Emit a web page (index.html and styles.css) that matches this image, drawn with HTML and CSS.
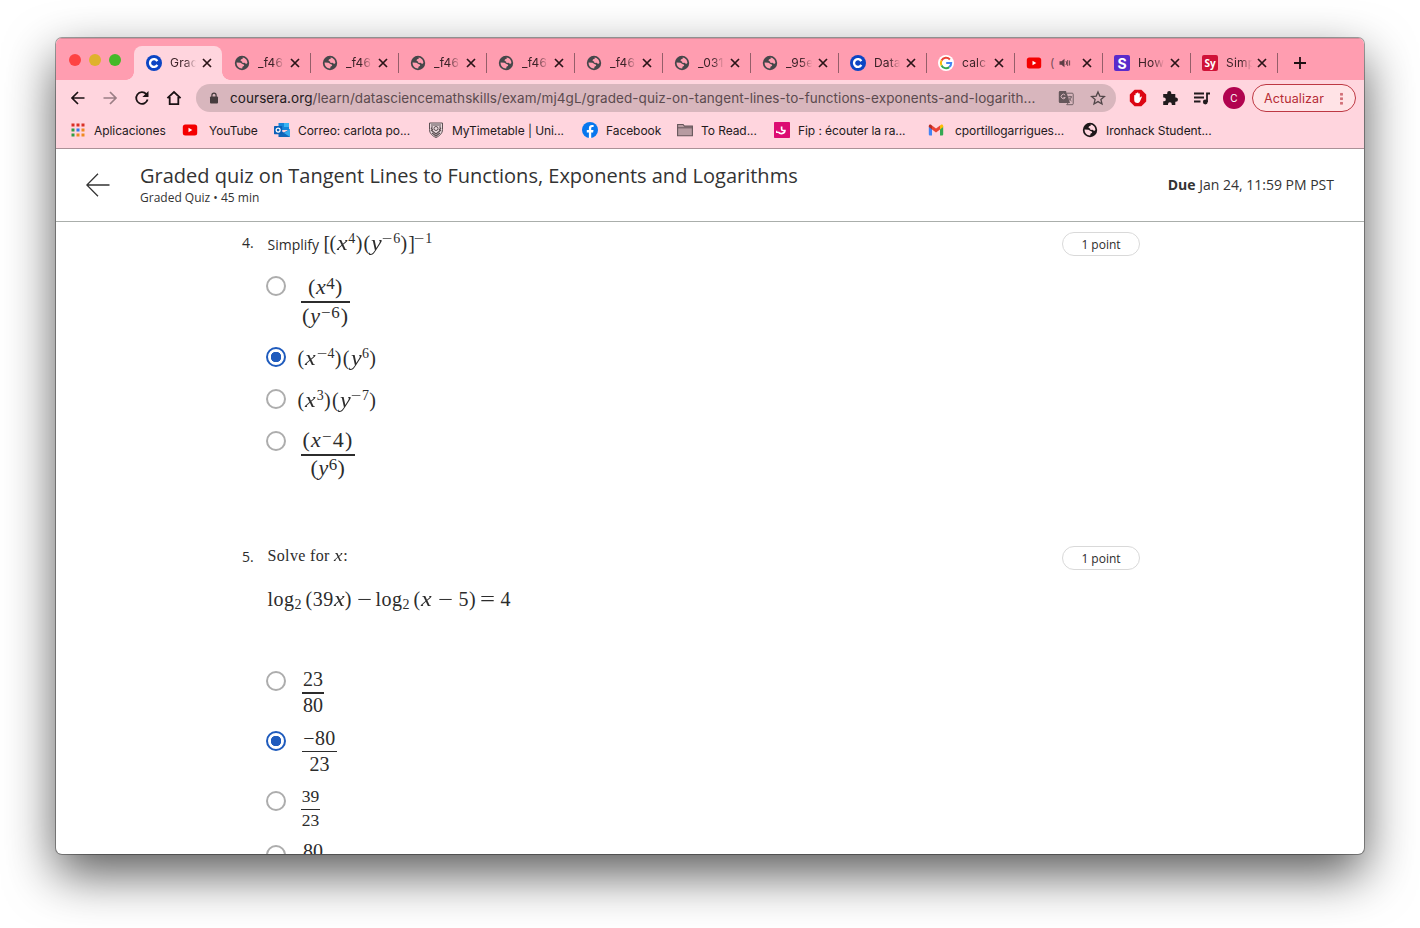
FILE: index.html
```html
<!DOCTYPE html>
<html lang="es">
<head>
<meta charset="utf-8">
<title>Graded quiz</title>
<link rel="stylesheet" href="styles.css">
</head>
<body>
<svg class="sprite" aria-hidden="true">
  <symbol id="close" viewBox="0 0 10 10"><path d="M1 1l8 8M9 1L1 9" stroke="#2b1418" stroke-width="1.7" fill="none"/></symbol>
  <symbol id="globe" viewBox="0 0 16 16"><circle cx="8" cy="8" r="7.200" fill="currentColor"/><path d="M8.600 2.500C11.300 2.800 13.400 5.200 13.400 8l-1.300.9-1.500-1.100-2 .1-.6-1.500-1.500-.7.5-1.500 1.600-.2z" fill="var(--cut)"/><path d="M2.600 7.500l3.900.3 1.900 1.300 1.400.3.400 1.300-1.700 1-.3 1.700C4.900 13.500 2.600 11 2.600 8z" fill="var(--cut)"/></symbol>
  <symbol id="coursera" viewBox="0 0 16 16"><circle cx="8" cy="8" r="8" fill="#0b45c4"/><path d="M11.300 9.900A3.900 3.900 0 1 1 11.300 6.100" stroke="#fff" stroke-width="2.300" fill="none"/></symbol>
  <symbol id="youtube" viewBox="0 0 16 16"><rect x=".8" y="2.600" width="14.400" height="10.800" rx="2.500" fill="#f40000"/><path d="M6.500 5.800v4.400L10.300 8z" fill="#fff"/></symbol>
  <symbol id="google" viewBox="0 0 16 16"><circle cx="8" cy="8" r="8" fill="#fff"/><path d="M11.900 4.500A5.200 5.200 0 0 0 3.500 5.500" stroke="#ea4335" stroke-width="2" fill="none"/><path d="M3.500 5.500a5.200 5.200 0 0 0 0 5" stroke="#fbbc05" stroke-width="2" fill="none"/><path d="M3.500 10.500a5.200 5.200 0 0 0 7.800 1.600" stroke="#34a853" stroke-width="2" fill="none"/><path d="M8.200 8h5a5.200 5.200 0 0 1-1.900 4.100" stroke="#4285f4" stroke-width="2" fill="none"/></symbol>
</svg>

<div class="window">
  <div class="tabstrip">
    <div class="lights"><i class="red"></i><i class="yellow"></i><i class="green"></i></div>
    <div class="tab active"><svg class="ico"><use href="#coursera"/></svg><span class="title">Grad</span><svg class="x"><use href="#close"/></svg></div>
    <div class="tab"><svg class="ico"><use href="#globe"/></svg><span class="title">_f46</span><svg class="x"><use href="#close"/></svg></div>
    <div class="tab"><svg class="ico"><use href="#globe"/></svg><span class="title">_f46</span><svg class="x"><use href="#close"/></svg></div>
    <div class="tab"><svg class="ico"><use href="#globe"/></svg><span class="title">_f46</span><svg class="x"><use href="#close"/></svg></div>
    <div class="tab"><svg class="ico"><use href="#globe"/></svg><span class="title">_f46</span><svg class="x"><use href="#close"/></svg></div>
    <div class="tab"><svg class="ico"><use href="#globe"/></svg><span class="title">_f46</span><svg class="x"><use href="#close"/></svg></div>
    <div class="tab"><svg class="ico"><use href="#globe"/></svg><span class="title">_031</span><svg class="x"><use href="#close"/></svg></div>
    <div class="tab"><svg class="ico"><use href="#globe"/></svg><span class="title">_95e</span><svg class="x"><use href="#close"/></svg></div>
    <div class="tab"><svg class="ico"><use href="#coursera"/></svg><span class="title">Data</span><svg class="x"><use href="#close"/></svg></div>
    <div class="tab"><svg class="ico"><use href="#google"/></svg><span class="title">calc</span><svg class="x"><use href="#close"/></svg></div>
    <div class="tab audible"><svg class="ico"><use href="#youtube"/></svg><span class="title">(</span><svg class="sound" viewBox="0 0 12 10"><path d="M.5 3.300h2L5.500.8v8.400L2.500 6.700h-2z" fill="#5d3d44"/><path d="M7 3q1.300 2 0 4M8.700 2v6M10.600 2.500v5" stroke="#5d3d44" stroke-width=".9" fill="none"/></svg><svg class="x"><use href="#close"/></svg></div>
    <div class="tab"><span class="ico badge purple">S</span><span class="title">How</span><svg class="x"><use href="#close"/></svg></div>
    <div class="tab last"><span class="ico badge crimson">Sy</span><span class="title">Simp</span><svg class="x"><use href="#close"/></svg></div>
    <svg class="plus" viewBox="0 0 12 12"><path d="M6 0v12M0 6h12" stroke="#1d1013" stroke-width="1.800"/></svg>
  </div>

  <div class="toolbar">
    <svg class="nav" viewBox="0 0 16 16"><path d="M14.500 8H2.500M8 2L2 8l6 6" stroke="#1b1214" stroke-width="1.700" fill="none"/></svg>
    <svg class="nav" viewBox="0 0 16 16"><path d="M1.500 8h12M8 2l6 6-6 6" stroke="#9b7e85" stroke-width="1.700" fill="none"/></svg>
    <svg class="nav" viewBox="0 0 16 16"><path d="M13.600 9.600A5.800 5.800 0 1 1 12.300 4.100" stroke="#1b1214" stroke-width="1.800" fill="none"/><path d="M14.500 1v6.100H8.400z" fill="#1b1214"/></svg>
    <svg class="nav" viewBox="0 0 16 16"><path d="M1.400 8.200L8 2l6.600 6.200M3.700 7v7.200h8.600V7" stroke="#1b1214" stroke-width="1.800" fill="none"/></svg>
    <div class="omnibox">
      <svg class="lock" viewBox="0 0 10 12"><rect x="1" y="4.500" width="8" height="7" rx="1" fill="#463c3e"/><path d="M2.900 5V3.200a2.100 2.100 0 0 1 4.200 0V5" stroke="#463c3e" stroke-width="1.200" fill="none"/></svg>
      <span class="url"><b>coursera.org</b>/learn/datasciencemathskills/exam/mj4gL/graded-quiz-on-tangent-lines-to-functions-exponents-and-logarith...</span>
      <svg class="translate" viewBox="0 0 16 16"><path d="M2 1h6l4 12H2a1.200 1.200 0 0 1-1.200-1.200V2.200A1.200 1.200 0 0 1 2 1z" fill="#65575b"/><path d="M7.200 5.200A2.200 2.200 0 1 0 7.300 7.600H5.400" stroke="#d7b6bd" fill="none"/><path d="M9 3.200h5.200a1 1 0 0 1 1 1v9.500a1 1 0 0 1-1 1H8.700l1.600-2M9.700 6.800h4.300M12 5.800v1M13.300 6.800c-.4 2-1.500 3.200-2.900 4.200M10.700 7.900c.7 1.300 1.700 2.300 2.800 3.100" stroke="#65575b" stroke-width=".9" fill="none"/></svg>
      <svg class="star" viewBox="0 0 16 16"><path d="M8 1.900l1.800 4.200 4.600.4-3.500 3 1.100 4.500L8 11.600 4 14l1.100-4.500-3.500-3 4.600-.4z" stroke="#514649" stroke-width="1.300" fill="none"/></svg>
    </div>
    <svg class="ext" viewBox="0 0 18 18"><path d="M5.600.8h6.800l4.800 4.800v6.800l-4.800 4.800H5.600L.8 12.400V5.600z" fill="#dc0613"/><path d="M5.200 9V6.300q.8-.8 1.300 0V4.500q.8-.8 1.400 0V3.800q.9-.8 1.500 0v.9q.9-.7 1.400.1v4l1.200-1.300q1.100-.2.900.6l-2 4.300q-.8 1.500-2.400 1.500-3.300 0-3.300-3.200z" fill="#fff"/></svg>
    <svg class="ext" viewBox="0 0 18 18"><path d="M2.200 5h4V4a2 2 0 0 1 4.100 0v1h4v3.600h.6a2 2 0 0 1 0 4.100h-.6V16h-3.500v-.8a1.900 1.900 0 0 0-3.800 0v.8H2.200v-3.700h.7a1.900 1.900 0 0 0 0-3.800h-.7z" fill="#211b1d"/></svg>
    <svg class="ext" viewBox="0 0 18 18"><path d="M1 4.500h10M1 8.500h10M1 12.500h6.500M14 13V4.500h3" stroke="#211b1d" stroke-width="1.800" fill="none"/><circle cx="12.300" cy="13" r="2.400" fill="#211b1d"/></svg>
    <span class="avatar">C</span>
    <span class="update"><span>Actualizar</span><i class="dots"></i></span>
  </div>

  <div class="bookmarks">
    <div class="bm"><svg viewBox="0 0 16 16"><g fill="#d93025"><path d="M1.500 1.500h3v3h-3zM6.500 1.500h3v3h-3zM11.500 1.500h3v3h-3z"/></g><path d="M1.500 6.500h3v3h-3zM1.500 11.500h3v3h-3z" fill="#2f9e44"/><path d="M6.500 6.500h3v3h-3z" fill="#3078ed"/><path d="M11.500 6.500h3v3h-3zM11.500 11.500h3v3h-3zM6.500 11.500h3v3h-3z" fill="#ef8a21"/></svg><span>Aplicaciones</span></div>
    <div class="bm wide"><svg><use href="#youtube"/></svg><span>YouTube</span></div>
    <div class="bm"><svg viewBox="0 0 16 16"><path d="M4.500 1H15v7H4.500z" fill="#1686d9"/><path d="M10 1h5v4h-5z" fill="#39b4f3"/><path d="M4.500 8L10 10.500 16 7v8H4.500z" fill="#1267b9"/><path d="M10 11l6-4v8z" fill="#35a9ee"/><rect x="0" y="4" width="8.200" height="8.200" rx=".6" fill="#0c60b8"/><circle cx="4.100" cy="8.100" r="2" stroke="#fff" stroke-width="1.200" fill="none"/></svg><span>Correo: carlota po...</span></div>
    <div class="bm"><svg viewBox="0 0 16 16"><path d="M1.500 1h13v6.500c0 4-3 6.500-6.500 8-3.500-1.500-6.500-4-6.500-8z" fill="#e9d9dc" stroke="#5d5054"/><path d="M3 3h10M3 5h2M11 5h2M3 8l5 4 5-4M4 11l4 3 4-3M3 6l2 2M13 6l-2 2" stroke="#5d5054" stroke-width="1.200" fill="none"/><circle cx="8" cy="6.500" r="2" stroke="#5d5054" fill="none"/></svg><span>MyTimetable | Uni...</span></div>
    <div class="bm"><svg viewBox="0 0 16 16"><circle cx="8" cy="8" r="8" fill="#0877ee"/><path d="M6.900 16v-5.500H4.800V8h2.100V6.200c0-2.200 1.200-3.300 3.100-3.300l1.600.1v2.100h-1.100c-1 0-1.300.6-1.300 1.300V8h2.300l-.4 2.500H9.200V16z" fill="#fff"/></svg><span>Facebook</span></div>
    <div class="bm"><svg viewBox="0 0 16 16"><path d="M.6 2.500h5.500l1.300 1.600h8v9.700H.6z" fill="#b79ba1" stroke="#65565a" stroke-width="1.100"/><path d="M.6 5.800h14.800" stroke="#65565a"/></svg><span>To Read...</span></div>
    <div class="bm"><svg viewBox="0 0 16 16"><rect width="16" height="16" rx=".8" fill="#dc0c72"/><path d="M7.600 4.600v2.600c0 1 .5 1.300 1.600 1.300h1.700c0 3.100-4.500 4.300-6.600 1.400" stroke="#fff" stroke-width="1.700" fill="none"/><path d="M2.700 8.800v1.600h2" stroke="#fff" stroke-width="1.300" fill="none"/></svg><span>Fip : écouter la ra...</span></div>
    <div class="bm wide"><svg viewBox="0 0 16 16"><path d="M.8 4.500L4 6.800v6.700H1.900A1.100 1.100 0 0 1 .8 12.400z" fill="#4285f4"/><path d="M15.200 4.500L12 6.800v6.700h2.100a1.100 1.100 0 0 0 1.100-1.100z" fill="#34a853"/><path d="M4 3.500l4 3 4-3v4l-4 3-4-3z" fill="#ea4335"/><path d="M.8 5V4C.8 2.500 2.300 2 3.300 2.900L4 3.500v4z" fill="#b92b22"/><path d="M15.200 5V4c0-1.500-1.500-2-2.500-1.100l-.7.6v4z" fill="#fbbc04"/></svg><span>cportillogarrigues...</span></div>
    <div class="bm dark"><svg><use href="#globe"/></svg><span>Ironhack Student...</span></div>
  </div>

  <div class="quizbar">
    <svg class="back" viewBox="0 0 24 24"><path d="M23.500 12H1M12 .8L.8 12 12 23.200" stroke="#333" stroke-width="1.300" fill="none"/></svg>
    <div class="heading"><h1>Graded quiz on Tangent Lines to Functions, Exponents and Logarithms</h1><p>Graded Quiz • 45 min</p></div>
    <div class="due"><b>Due</b> Jan 24, 11:59 PM PST</div>
  </div>

  <div class="quiz">
    <section class="question q4">
      <div class="head"><span class="no">4.</span><div class="stem"><span class="sans">Simplify</span> <span class="math"><span class="br">[</span>(<i>x</i><sup>4</sup>)(<i>y</i><sup><span class="m">−</span>6</sup>)<span class="br">]</span><sup><span class="m">−</span>1</sup></span></div><span class="points">1 point</span></div>
      <div class="option o1"><i class="radio"></i><span class="frac thick"><span class="num">(<i>x</i><sup>4</sup>)</span><span class="den">(<i>y</i><sup>−6</sup>)</span></span></div>
      <div class="option o2"><i class="radio on"></i><span class="math">(<i>x</i><sup><span class="m">−</span>4</sup>)(<i>y</i><sup>6</sup>)</span></div>
      <div class="option o3"><i class="radio"></i><span class="math">(<i>x</i><sup>3</sup>)(<i>y</i><sup><span class="m">−</span>7</sup>)</span></div>
      <div class="option o4"><i class="radio"></i><span class="frac thick"><span class="num">(<i>x</i><sup>−</sup>4)</span><span class="den">(<i>y</i><sup>6</sup>)</span></span></div>
    </section>
    <section class="question q5">
      <div class="head"><span class="no">5.</span><div class="stem"><p class="solve">Solve for <i>x</i>:</p><p class="equation math"><span class="e1">log<sub>2</sub></span><span class="e2">(39<i>x</i>)</span><span class="e3"><span class="m">−</span></span><span class="e4">log<sub>2</sub></span><span class="e5">(<i>x</i><span class="m op">−</span>5)</span><span class="e6"><span class="m">=</span></span><span>4</span></p></div><span class="points">1 point</span></div>
      <div class="option o5"><i class="radio"></i><span class="frac thick"><span class="num">23</span><span class="den">80</span></span></div>
      <div class="option o6"><i class="radio on"></i><span class="frac"><span class="num">−80</span><span class="den">23</span></span></div>
      <div class="option o7"><i class="radio"></i><span class="frac"><span class="num">39</span><span class="den">23</span></span></div>
      <div class="option o8"><i class="radio"></i><span class="frac"><span class="num">80</span></span></div>
    </section>
  </div>
</div>
</body>
</html>
```
FILE: styles.css
```css
* { box-sizing: border-box; }
body { margin: 0; height: 928px; padding: 38px 56px; background: #fff; overflow: hidden; font-family: Inter, "Liberation Sans", sans-serif; color: #2b1d20; }
.sprite { display: none; }
svg { display: block; flex: none; }
h1, p { margin: 0; font-weight: 400; }

.window { width: 1308px; height: 816px; display: flex; flex-direction: column; overflow: hidden; background: #fff; border-radius: 6px; box-shadow: 0 0 0 1px rgba(0,0,0,.35), 0 20px 50px rgba(0,0,0,.65); }

/* tabs */
.tabstrip { flex: none; height: 42px; display: flex; align-items: flex-end; background: #ff9db0; border-top: 1px solid #d98a99; --cut: #ff9db0; }
.lights { width: 78px; height: 42px; display: flex; gap: 8px; padding: 16px 0 0 13px; }
.lights i { width: 12px; height: 12px; border-radius: 50%; }
.red { background: #fe4343; }
.yellow { background: #dfb22b; }
.green { background: #45b927; }
.tab { position: relative; flex: none; width: 88px; height: 34px; display: flex; align-items: center; padding-left: 12px; color: #46474a; }
.tab:not(.active)::after { content: ""; flex: none; width: 1px; height: 20px; margin-left: 10px; background: #955e69; }
.ico { flex: none; width: 16px; height: 16px; }
.title { flex: none; width: 27px; margin-left: 8px; white-space: nowrap; font-size: 12px; letter-spacing: .2px; line-height: 18px; color: #3b2227; -webkit-mask-image: linear-gradient(90deg, #000 55%, transparent 97%); mask-image: linear-gradient(90deg, #000 55%, transparent 97%); }
.x { width: 10px; height: 10px; margin-left: 5px; }
.active { background: #ffd5de; border-radius: 8px 8px 0 0; }
.active::before, .active::after { content: ""; position: absolute; bottom: 0; width: 8px; height: 8px; }
.active::before { left: -8px; background: radial-gradient(circle at 0 0, transparent 7.500px, #ffd5de 8px); }
.active::after { right: -8px; background: radial-gradient(circle at 100% 0, transparent 7.500px, #ffd5de 8px); }
.audible .title { width: 6px; margin-left: 8px; color: #7a4d57; -webkit-mask-image: none; mask-image: none; }
.sound { width: 12px; height: 10px; margin-left: 3px; }
.audible .x { margin-left: 11px; }
.badge { display: flex; align-items: center; justify-content: center; color: #fff; font-weight: 700; border-radius: 2px; }
.purple { background: #5a2bcb; font-size: 14px; }
.crimson { background: #d01238; font-size: 10px; font-family: "Open Sans", sans-serif; }
.last .x { margin-left: 4px; }
.plus { width: 12px; height: 12px; margin: 0 0 11px 16px; }

/* toolbar */
.toolbar { flex: none; height: 37px; display: flex; align-items: center; padding: 0 8px 1px 14px; background: #ffd5de; }
.nav { width: 16px; height: 16px; margin-right: 16px; }
.omnibox { flex: none; width: 920px; height: 28px; margin-left: -2px; display: flex; align-items: center; padding-left: 13px; border-radius: 14px; background: #d8b6bd; }
.lock { width: 10px; height: 12px; }
.url { width: 820px; margin-left: 11px; white-space: nowrap; font-size: 13.500px; letter-spacing: .07px; line-height: 20px; color: #5b4a4e; }
.url b { font-weight: 400; color: #231a1c; }
.translate { width: 16px; height: 16px; margin-left: 8px; }
.star { width: 16px; height: 16px; margin-left: 16px; }
.ext { width: 18px; height: 18px; margin-left: 14px; }
.omnibox + .ext { margin-left: 13px; }
.avatar { flex: none; width: 22px; height: 22px; margin-left: 12px; border-radius: 50%; background: #b1034f; color: #fff; font-size: 10px; line-height: 22px; text-align: center; }
.update { flex: none; width: 104px; height: 28px; margin-left: 7px; display: flex; align-items: center; justify-content: space-between; padding: 0 12px 0 11px; border: 1px solid #bd3843; border-radius: 14px; background: #ffe3e6; color: #b62c35; font-size: 12.500px; letter-spacing: .1px; }
.dots { width: 3px; height: 13px; background: radial-gradient(circle, #d27078 1.300px, transparent 1.700px) 0 0 / 3px 4.500px; }

.bookmarks { flex: none; height: 32px; display: grid; grid-template-columns: 112px 92px 154px 154px 95px 97px 154px 154px 150px; padding-left: 14px; background: #ffd5de; border-bottom: 1px solid #ab9197; --cut: #ffd5de; }
.bm { height: 26px; display: flex; align-items: center; gap: 8px; white-space: nowrap; font-size: 12px; letter-spacing: -.07px; color: #241a1c; }
.bm svg { width: 16px; height: 16px; }
.wide { gap: 11px; }
.dark { color: #1d1719; }

/* quiz header */
.quizbar { flex: none; height: 73px; display: flex; align-items: flex-start; padding: 0 30px 0 30px; border-bottom: 1px solid #aaaeab; font-family: "Open Sans", sans-serif; color: #333; }
.back { width: 24px; height: 24px; margin-top: 24px; }
.heading { flex: 1; margin-left: 30px; padding-top: 14px; }
.heading h1 { font-size: 20px; line-height: 26px; white-space: nowrap; }
.heading p { font-size: 12px; line-height: 18px; }
.due { padding-top: 26px; font-size: 14px; line-height: 20px; white-space: nowrap; }

/* questions */
.quiz { flex: 1; overflow: hidden; padding-left: 186px; color: #2c2c2c; }
.question { width: 898px; }
.head { display: flex; align-items: flex-start; }
.no { width: 25.500px; margin-top: 1px; font: 14px/20px "Open Sans", sans-serif; }
.stem { flex: 1; white-space: nowrap; }
.points { width: 78px; height: 24px; border: 1px solid #d9d9d9; border-radius: 12px; font: 12px/23px "Open Sans", sans-serif; text-align: center; }
.q4 .head { height: 54px; padding-top: 10px; }
.q5 .head { height: 135px; padding-top: 10px; }
.sans { font: 14px/24px "Open Sans", sans-serif; }
.math, .frac, .solve { font-family: "Liberation Serif", serif; }

/* inline maths: wide italics and operators */
.math { font-size: 20px; line-height: 22px; letter-spacing: 1.100px; white-space: nowrap; }
.math i, .solve i { display: inline-block; width: .56em; letter-spacing: 0; transform: scaleX(1.2); transform-origin: 0 50%; }
.math sup, .math sub { letter-spacing: .3px; }
.br { letter-spacing: -.8px; }
.m { display: inline-block; width: .778em; letter-spacing: 0; transform: scaleX(1.33); transform-origin: 0 50%; }
.op { margin: 0 5px 0 6px; }
sup, sub { font-size: .7em; line-height: 0; vertical-align: .5em; }
sub { vertical-align: -.22em; }
.solve { font-size: 16px; line-height: 20px; letter-spacing: .35px; }
.solve i { width: .57em; }
.equation { display: flex; margin-top: 22px; letter-spacing: .5px; }
.e1, .e4 { width: 38px; }
.e2 { width: 51.500px; }
.e3 { width: 18.500px; }
.e5 { width: 66px; }
.e6 { width: 21px; }

.option { display: flex; align-items: flex-start; padding-left: 24px; }
.radio { flex: none; width: 20px; height: 20px; border: 2px solid #adadad; border-radius: 50%; }
.radio.on { border-color: #1f5bbd; background: radial-gradient(circle, #1f5bbd 5px, transparent 5.500px); }
.option .math { margin-left: 11.500px; letter-spacing: 1.300px; }
.frac { display: flex; flex-direction: column; margin-left: 15px; text-align: center; white-space: nowrap; font-size: 20px; }
.den { border-top: 1px solid #2c2c2c; }
.thick .den { border-top-width: 2px; }
.frac sup { font-size: .77em; vertical-align: .3em; }
.o1 { height: 71px; }
.o2, .o3 { height: 42px; }
.o4 { height: 105px; }
.o1 .frac, .o4 .frac { font-size: 22px; letter-spacing: .5px; }
.o1 .frac { width: 49px; }
.o1 .num { line-height: 22px; margin-bottom: 3px; }
.o1 .den { line-height: 26px; letter-spacing: .9px; }
.o4 .frac { width: 54px; }
.o4 .num { line-height: 18px; margin-bottom: 5px; letter-spacing: 1.200px; }
.o4 .den { line-height: 24px; }
.o5, .o6 { height: 60px; }
.o5 .frac { width: 22px; margin-left: 16px; }
.o5 .num { line-height: 16px; margin-bottom: 5px; }
.o5 .den { line-height: 23px; }
.o6 .frac { width: 35px; margin-left: 16px; }
.o6 .num { line-height: 14px; margin-bottom: 6px; letter-spacing: .4px; }
.o6 .den { line-height: 24px; }
.o7 { height: 54px; }
.o7 .frac { width: 19px; font-size: 17.500px; }
.o7 .num { line-height: 10px; margin-bottom: 8px; }
.o7 .den { line-height: 20px; }
.o8 .frac { margin-left: 17px; }
.o8 .num { line-height: 13px; }
```
